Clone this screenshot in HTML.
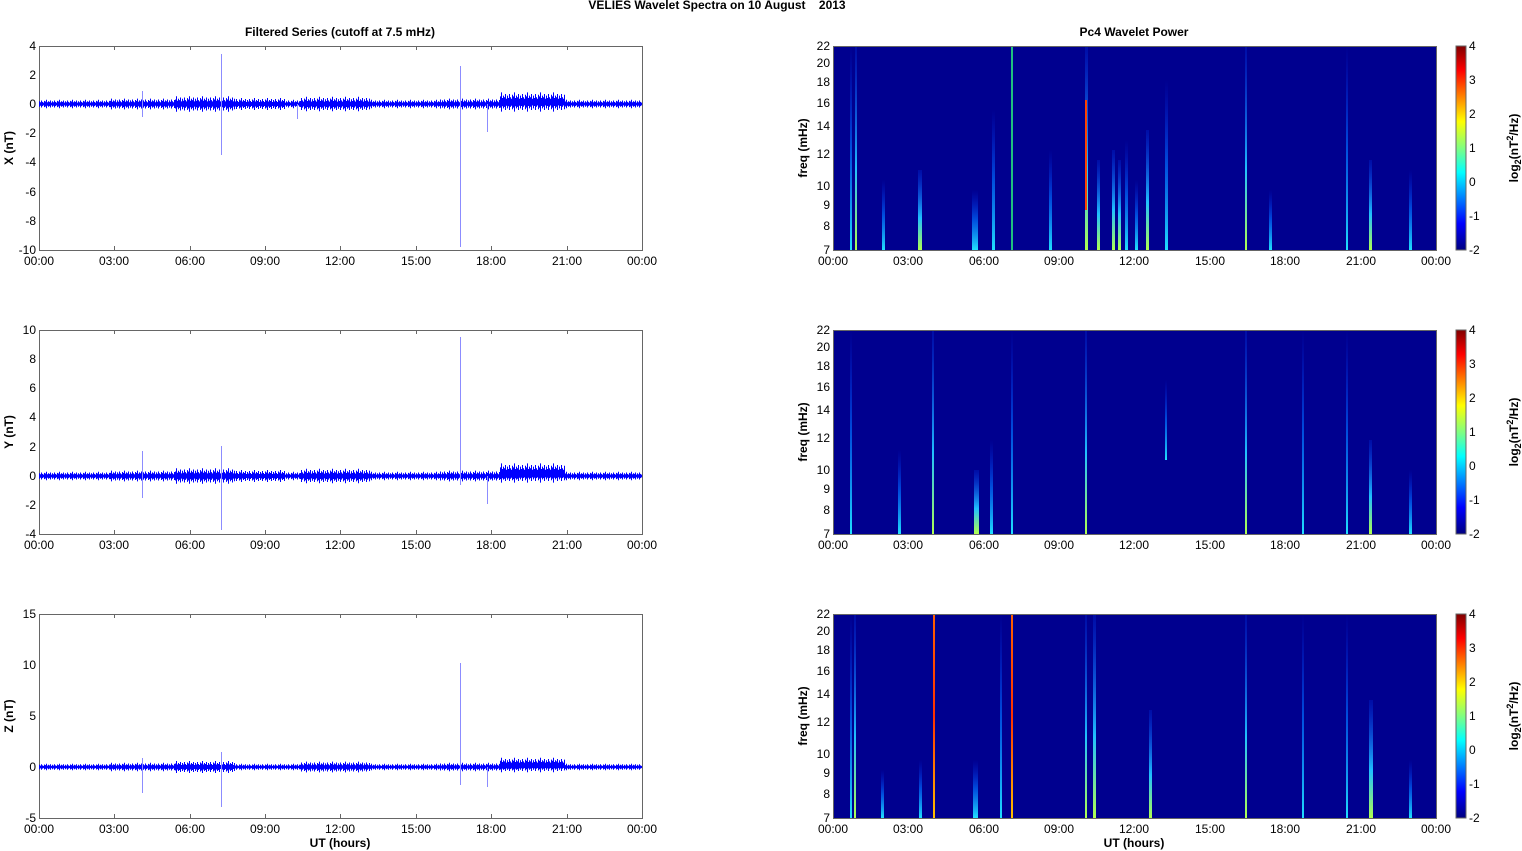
<!DOCTYPE html>
<html><head><meta charset="utf-8"><style>
html,body{margin:0;padding:0;background:#fff;}
svg{display:block;font-family:"Liberation Sans",Arial,sans-serif;}
.t{font-size:12px;fill:#000;}
.b{font-size:12px;font-weight:bold;fill:#000;}
.ax{fill:none;stroke:#666;stroke-width:1;}
.tk{stroke:#666;stroke-width:1;}
.sp{stroke:#8c8cff;stroke-width:1;}
</style></head><body>
<svg width="1522" height="851" viewBox="0 0 1522 851" xmlns="http://www.w3.org/2000/svg">
<defs>
<linearGradient id="jet" x1="0" y1="0" x2="0" y2="1">
<stop offset="0" stop-color="#800000"/><stop offset="0.12" stop-color="#ff0000"/><stop offset="0.37" stop-color="#ffff00"/><stop offset="0.5" stop-color="#80ff80"/><stop offset="0.62" stop-color="#00ffff"/><stop offset="0.87" stop-color="#0000ff"/><stop offset="1" stop-color="#000080"/>
</linearGradient>
<linearGradient id="s1" x1="0" y1="1" x2="0" y2="0">
<stop offset="0" stop-color="#20e0ff"/><stop offset="0.5" stop-color="#0070ff" stop-opacity="0.7"/><stop offset="1" stop-color="#0030ff" stop-opacity="0"/>
</linearGradient>
<linearGradient id="s2" x1="0" y1="1" x2="0" y2="0">
<stop offset="0" stop-color="#b0ff50"/><stop offset="0.4" stop-color="#20c0ff"/><stop offset="1" stop-color="#0040ff" stop-opacity="0.2"/>
</linearGradient>
<linearGradient id="s3" x1="0" y1="1" x2="0" y2="0">
<stop offset="0" stop-color="#ffc000"/><stop offset="0.5" stop-color="#ff3000"/><stop offset="1" stop-color="#ff6000"/>
</linearGradient>
<pattern id="nz" patternUnits="userSpaceOnUse" x="0" y="-10" width="13" height="20">
<g stroke="#0000ff" stroke-width="1">
<path d="M0.5 6v8M1.5 7.5v5M2.5 5v10M3.5 7v6M4.5 8v4M5.5 5.5v9M6.5 6.5v7M7.5 4v12M8.5 7.5v5M9.5 6v8M10.5 7v6M11.5 5v10M12.5 8v4"/>
</g>
<rect x="0" y="8.5" width="13" height="3" fill="#0000ff"/>
</pattern>
</defs>

<text class="b" x="717" y="9" text-anchor="middle" xml:space="preserve">VELIES Wavelet Spectra on 10 August    2013</text>
<text class="b" x="340" y="36" text-anchor="middle">Filtered Series (cutoff at 7.5 mHz)</text>
<text class="b" x="1134" y="36" text-anchor="middle">Pc4 Wavelet Power</text>

<!-- Panel X -->
<g>
<rect class="ax" x="39.5" y="46.5" width="603" height="204"/>
<rect x="39" y="-10" width="603" height="20" fill="url(#nz)" transform="translate(0,104) scale(1,0.7)"/>
<rect x="110" y="-10" width="80" height="20" fill="url(#nz)" transform="translate(0,104) scale(1,0.9)"/>
<rect x="175" y="-10" width="60" height="20" fill="url(#nz)" transform="translate(0,104) scale(1,1.3)"/>
<rect x="235" y="-10" width="50" height="20" fill="url(#nz)" transform="translate(0,104) scale(1,1.0)"/>
<rect x="300" y="-10" width="70" height="20" fill="url(#nz)" transform="translate(0,104) scale(1,1.2)"/>
<rect x="440" y="-10" width="80" height="20" fill="url(#nz)" transform="translate(0,104) scale(1,0.9)"/>
<rect x="500" y="-10" width="65" height="20" fill="url(#nz)" transform="translate(0,102) scale(1,1.6)"/>
<line class="sp" x1="221.5" y1="54" x2="221.5" y2="155"/>
<line class="sp" x1="460.5" y1="66" x2="460.5" y2="247"/>
<line class="sp" x1="142.5" y1="91" x2="142.5" y2="117"/>
<line class="sp" x1="487.5" y1="104" x2="487.5" y2="132"/>
<line class="sp" x1="297.5" y1="104" x2="297.5" y2="119"/>
</g>
<g class="t" text-anchor="end">
<text x="36" y="50">4</text><text x="36" y="79">2</text><text x="36" y="108">0</text><text x="36" y="137">-2</text><text x="36" y="166">-4</text><text x="36" y="196">-6</text><text x="36" y="225">-8</text><text x="36" y="254">-10</text>
</g>
<g class="t" text-anchor="middle">
<text x="39" y="265">00:00</text><text x="114" y="265">03:00</text><text x="190" y="265">06:00</text><text x="265" y="265">09:00</text><text x="340" y="265">12:00</text><text x="416" y="265">15:00</text><text x="491" y="265">18:00</text><text x="567" y="265">21:00</text><text x="642" y="265">00:00</text>
</g>
<text class="b" transform="translate(13,148) rotate(-90)" text-anchor="middle">X (nT)</text>

<!-- Panel Y -->
<g>
<rect class="ax" x="39.5" y="330.5" width="603" height="204"/>
<rect x="39" y="-10" width="603" height="20" fill="url(#nz)" transform="translate(0,476) scale(1,0.7)"/>
<rect x="110" y="-10" width="80" height="20" fill="url(#nz)" transform="translate(0,476) scale(1,0.9)"/>
<rect x="175" y="-10" width="60" height="20" fill="url(#nz)" transform="translate(0,476) scale(1,1.3)"/>
<rect x="235" y="-10" width="50" height="20" fill="url(#nz)" transform="translate(0,476) scale(1,1.0)"/>
<rect x="300" y="-10" width="70" height="20" fill="url(#nz)" transform="translate(0,476) scale(1,1.2)"/>
<rect x="440" y="-10" width="80" height="20" fill="url(#nz)" transform="translate(0,476) scale(1,0.9)"/>
<rect x="500" y="-10" width="65" height="20" fill="url(#nz)" transform="translate(0,473) scale(1,1.6)"/>
<line class="sp" x1="221.5" y1="446" x2="221.5" y2="530"/>
<line class="sp" x1="460.5" y1="337" x2="460.5" y2="485"/>
<line class="sp" x1="142.5" y1="451" x2="142.5" y2="498"/>
<line class="sp" x1="487.5" y1="476" x2="487.5" y2="504"/>
</g>
<g class="t" text-anchor="end">
<text x="36" y="334">10</text><text x="36" y="363">8</text><text x="36" y="392">6</text><text x="36" y="421">4</text><text x="36" y="451">2</text><text x="36" y="480">0</text><text x="36" y="509">-2</text><text x="36" y="538">-4</text>
</g>
<g class="t" text-anchor="middle">
<text x="39" y="549">00:00</text><text x="114" y="549">03:00</text><text x="190" y="549">06:00</text><text x="265" y="549">09:00</text><text x="340" y="549">12:00</text><text x="416" y="549">15:00</text><text x="491" y="549">18:00</text><text x="567" y="549">21:00</text><text x="642" y="549">00:00</text>
</g>
<text class="b" transform="translate(13,432) rotate(-90)" text-anchor="middle">Y (nT)</text>

<!-- Panel Z -->
<g>
<rect class="ax" x="39.5" y="614.5" width="603" height="204"/>
<rect x="39" y="-10" width="603" height="20" fill="url(#nz)" transform="translate(0,767) scale(1,0.55)"/>
<rect x="110" y="-10" width="80" height="20" fill="url(#nz)" transform="translate(0,767) scale(1,0.7)"/>
<rect x="175" y="-10" width="60" height="20" fill="url(#nz)" transform="translate(0,767) scale(1,1.0)"/>
<rect x="300" y="-10" width="70" height="20" fill="url(#nz)" transform="translate(0,767) scale(1,0.9)"/>
<rect x="440" y="-10" width="80" height="20" fill="url(#nz)" transform="translate(0,767) scale(1,0.7)"/>
<rect x="500" y="-10" width="65" height="20" fill="url(#nz)" transform="translate(0,765) scale(1,1.2)"/>
<line class="sp" x1="221.5" y1="752" x2="221.5" y2="807"/>
<line class="sp" x1="460.5" y1="663" x2="460.5" y2="785"/>
<line class="sp" x1="142.5" y1="758" x2="142.5" y2="793"/>
<line class="sp" x1="487.5" y1="767" x2="487.5" y2="787"/>
</g>
<g class="t" text-anchor="end">
<text x="36" y="618">15</text><text x="36" y="669">10</text><text x="36" y="720">5</text><text x="36" y="771">0</text><text x="36" y="822">-5</text>
</g>
<g class="t" text-anchor="middle">
<text x="39" y="833">00:00</text><text x="114" y="833">03:00</text><text x="190" y="833">06:00</text><text x="265" y="833">09:00</text><text x="340" y="833">12:00</text><text x="416" y="833">15:00</text><text x="491" y="833">18:00</text><text x="567" y="833">21:00</text><text x="642" y="833">00:00</text>
</g>
<text class="b" transform="translate(13,716) rotate(-90)" text-anchor="middle">Z (nT)</text>
<text class="b" x="340" y="847" text-anchor="middle">UT (hours)</text>

<g class="tk">
<path d="M114.5 46v4M190.5 46v4M265.5 46v4M340.5 46v4M416.5 46v4M491.5 46v4M567.5 46v4M114.5 250v-4M190.5 250v-4M265.5 250v-4M340.5 250v-4M416.5 250v-4M491.5 250v-4M567.5 250v-4"/>
<path d="M114.5 330v4M190.5 330v4M265.5 330v4M340.5 330v4M416.5 330v4M491.5 330v4M567.5 330v4M114.5 534v-4M190.5 534v-4M265.5 534v-4M340.5 534v-4M416.5 534v-4M491.5 534v-4M567.5 534v-4"/>
<path d="M114.5 614v4M190.5 614v4M265.5 614v4M340.5 614v4M416.5 614v4M491.5 614v4M567.5 614v4M114.5 818v-4M190.5 818v-4M265.5 818v-4M340.5 818v-4M416.5 818v-4M491.5 818v-4M567.5 818v-4"/>
</g>

<!-- Spec 1 -->
<rect x="833" y="46" width="603" height="204" fill="#00008f"/>
<g>
<rect x="850" y="46" width="2" height="204" fill="url(#s1)"/>
<rect x="855" y="46" width="2" height="204" fill="url(#s2)"/>
<rect x="882" y="180" width="3" height="70" fill="url(#s1)"/>
<rect x="918" y="170" width="4" height="80" fill="url(#s2)"/>
<rect x="972" y="190" width="6" height="60" fill="url(#s1)"/>
<rect x="992" y="110" width="3" height="140" fill="url(#s1)"/>
<rect x="1011" y="46" width="2" height="204" fill="#20c080"/>
<rect x="1049" y="150" width="3" height="100" fill="url(#s1)"/>
<rect x="1085" y="46" width="3" height="204" fill="url(#s2)"/>
<rect x="1085" y="100" width="2" height="110" fill="#ff4000"/>
<rect x="1097" y="160" width="3" height="90" fill="url(#s2)"/>
<rect x="1112" y="150" width="3" height="100" fill="url(#s2)"/>
<rect x="1118" y="160" width="3" height="90" fill="url(#s2)"/>
<rect x="1125" y="140" width="3" height="110" fill="url(#s1)"/>
<rect x="1135" y="180" width="3" height="70" fill="url(#s1)"/>
<rect x="1146" y="130" width="3" height="120" fill="url(#s2)"/>
<rect x="1165" y="80" width="3" height="170" fill="url(#s1)"/>
<rect x="1245" y="46" width="2" height="204" fill="url(#s2)"/>
<rect x="1269" y="190" width="3" height="60" fill="url(#s1)"/>
<rect x="1346" y="46" width="2" height="204" fill="url(#s1)"/>
<rect x="1369" y="160" width="3" height="90" fill="url(#s2)"/>
<rect x="1409" y="170" width="3" height="80" fill="url(#s1)"/>
</g>
<!-- Spec 2 -->
<rect x="833" y="330" width="603" height="204" fill="#00008f"/>
<g>
<rect x="850" y="330" width="2" height="204" fill="url(#s1)"/>
<rect x="898" y="450" width="3" height="84" fill="url(#s1)"/>
<rect x="932" y="330" width="2" height="204" fill="url(#s2)"/>
<rect x="974" y="470" width="5" height="64" fill="url(#s2)"/>
<rect x="990" y="440" width="3" height="94" fill="url(#s1)"/>
<rect x="1011" y="330" width="2" height="204" fill="url(#s1)"/>
<rect x="1085" y="330" width="2" height="204" fill="url(#s2)"/>
<rect x="1165" y="380" width="2" height="80" fill="url(#s1)"/>
<rect x="1245" y="330" width="2" height="204" fill="url(#s2)"/>
<rect x="1302" y="330" width="2" height="204" fill="url(#s1)"/>
<rect x="1346" y="330" width="2" height="204" fill="url(#s1)"/>
<rect x="1369" y="440" width="3" height="94" fill="url(#s2)"/>
<rect x="1409" y="470" width="3" height="64" fill="url(#s1)"/>
</g>
<!-- Spec 3 -->
<rect x="833" y="614" width="603" height="204" fill="#00008f"/>
<g>
<rect x="850" y="614" width="2" height="204" fill="url(#s1)"/>
<rect x="854" y="614" width="2" height="204" fill="url(#s2)"/>
<rect x="881" y="770" width="3" height="48" fill="url(#s1)"/>
<rect x="919" y="760" width="3" height="58" fill="url(#s1)"/>
<rect x="933" y="614" width="2" height="204" fill="url(#s3)"/>
<rect x="973" y="760" width="5" height="58" fill="url(#s1)"/>
<rect x="1000" y="614" width="2" height="204" fill="url(#s1)"/>
<rect x="1011" y="614" width="2" height="204" fill="url(#s3)"/>
<rect x="1085" y="614" width="2" height="204" fill="url(#s2)"/>
<rect x="1093" y="614" width="3" height="204" fill="url(#s2)"/>
<rect x="1149" y="710" width="3" height="108" fill="url(#s2)"/>
<rect x="1245" y="614" width="2" height="204" fill="url(#s2)"/>
<rect x="1302" y="614" width="2" height="204" fill="url(#s1)"/>
<rect x="1346" y="614" width="2" height="204" fill="url(#s1)"/>
<rect x="1369" y="700" width="4" height="118" fill="url(#s2)"/>
<rect x="1409" y="760" width="3" height="58" fill="url(#s1)"/>
</g>
<rect class="ax" x="833.5" y="46.5" width="603" height="204"/>
<rect class="ax" x="833.5" y="330.5" width="603" height="204"/>
<rect class="ax" x="833.5" y="614.5" width="603" height="204"/>

<g class="t" text-anchor="end">
<text x="830" y="50">22</text><text x="830" y="67">20</text><text x="830" y="86">18</text><text x="830" y="107">16</text><text x="830" y="130">14</text><text x="830" y="158">12</text><text x="830" y="190">10</text><text x="830" y="209">9</text><text x="830" y="230">8</text><text x="830" y="254">7</text>
<text x="830" y="334">22</text><text x="830" y="351">20</text><text x="830" y="370">18</text><text x="830" y="391">16</text><text x="830" y="414">14</text><text x="830" y="442">12</text><text x="830" y="474">10</text><text x="830" y="493">9</text><text x="830" y="514">8</text><text x="830" y="538">7</text>
<text x="830" y="618">22</text><text x="830" y="635">20</text><text x="830" y="654">18</text><text x="830" y="675">16</text><text x="830" y="698">14</text><text x="830" y="726">12</text><text x="830" y="758">10</text><text x="830" y="777">9</text><text x="830" y="798">8</text><text x="830" y="822">7</text>
</g>
<text class="b" transform="translate(807,148) rotate(-90)" text-anchor="middle">freq (mHz)</text>
<text class="b" transform="translate(807,432) rotate(-90)" text-anchor="middle">freq (mHz)</text>
<text class="b" transform="translate(807,716) rotate(-90)" text-anchor="middle">freq (mHz)</text>
<g class="t" text-anchor="middle">
<text x="833" y="265">00:00</text><text x="908" y="265">03:00</text><text x="984" y="265">06:00</text><text x="1059" y="265">09:00</text><text x="1134" y="265">12:00</text><text x="1210" y="265">15:00</text><text x="1285" y="265">18:00</text><text x="1361" y="265">21:00</text><text x="1436" y="265">00:00</text>
<text x="833" y="549">00:00</text><text x="908" y="549">03:00</text><text x="984" y="549">06:00</text><text x="1059" y="549">09:00</text><text x="1134" y="549">12:00</text><text x="1210" y="549">15:00</text><text x="1285" y="549">18:00</text><text x="1361" y="549">21:00</text><text x="1436" y="549">00:00</text>
<text x="833" y="833">00:00</text><text x="908" y="833">03:00</text><text x="984" y="833">06:00</text><text x="1059" y="833">09:00</text><text x="1134" y="833">12:00</text><text x="1210" y="833">15:00</text><text x="1285" y="833">18:00</text><text x="1361" y="833">21:00</text><text x="1436" y="833">00:00</text>
</g>
<text class="b" x="1134" y="847" text-anchor="middle">UT (hours)</text>

<rect x="1456" y="46" width="10" height="204" fill="url(#jet)" stroke="#666"/>
<rect x="1456" y="330" width="10" height="204" fill="url(#jet)" stroke="#666"/>
<rect x="1456" y="614" width="10" height="204" fill="url(#jet)" stroke="#666"/>
<g class="t">
<text x="1469" y="50">4</text><text x="1469" y="84">3</text><text x="1469" y="118">2</text><text x="1469" y="152">1</text><text x="1469" y="186">0</text><text x="1469" y="220">-1</text><text x="1469" y="254">-2</text>
<text x="1469" y="334">4</text><text x="1469" y="368">3</text><text x="1469" y="402">2</text><text x="1469" y="436">1</text><text x="1469" y="470">0</text><text x="1469" y="504">-1</text><text x="1469" y="538">-2</text>
<text x="1469" y="618">4</text><text x="1469" y="652">3</text><text x="1469" y="686">2</text><text x="1469" y="720">1</text><text x="1469" y="754">0</text><text x="1469" y="788">-1</text><text x="1469" y="822">-2</text>
</g>
<text class="b" transform="translate(1518,148) rotate(-90)" text-anchor="middle">log<tspan font-size="9" dy="3">2</tspan><tspan dy="-3">(nT</tspan><tspan font-size="9" dy="-5">2</tspan><tspan dy="5">/Hz)</tspan></text>
<text class="b" transform="translate(1518,432) rotate(-90)" text-anchor="middle">log<tspan font-size="9" dy="3">2</tspan><tspan dy="-3">(nT</tspan><tspan font-size="9" dy="-5">2</tspan><tspan dy="5">/Hz)</tspan></text>
<text class="b" transform="translate(1518,716) rotate(-90)" text-anchor="middle">log<tspan font-size="9" dy="3">2</tspan><tspan dy="-3">(nT</tspan><tspan font-size="9" dy="-5">2</tspan><tspan dy="5">/Hz)</tspan></text>
</svg>
</body></html>
